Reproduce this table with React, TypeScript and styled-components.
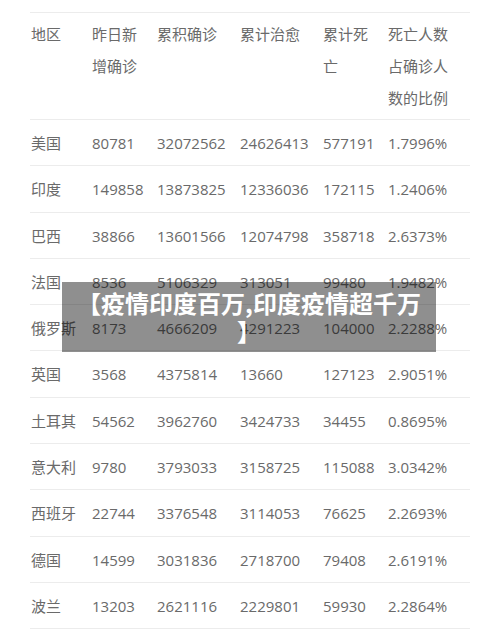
import styled, { createGlobalStyle } from 'styled-components'

const GlobalStyle = createGlobalStyle`
  body {
    margin: 0;
    background: #ffffff;
    font-family: "Open Sans", "Noto Sans CJK SC", sans-serif;
  }
`

const Page = styled.div`
  position: relative;
  width: 500px;
  height: 634px;
  overflow: hidden;
  padding: 12px 0 0 30px;
  box-sizing: border-box;
`

const Table = styled.table`
  width: 440px;
  table-layout: fixed;
  border-collapse: collapse;
  color: #6a6a6a;
  font-size: 15px;
  line-height: 32px;
`

const Row = styled.tr`
  border-top: 1px solid #ececec;
  border-bottom: 1px solid #ececec;
`

const Cell = styled.td<{ $head?: boolean }>`
  padding: ${(p) => (p.$head ? '5px 9px 5px 1px' : '7px 4px 6.3px 1px')};
  vertical-align: top;
  text-align: left;
  font-weight: normal;
  white-space: ${(p) => (p.$head ? 'normal' : 'nowrap')};
`

const Banner = styled.div`
  position: absolute;
  left: 62px;
  top: 282px;
  width: 374px;
  box-sizing: border-box;
  padding: 7px 14px;
  background: rgba(0, 0, 0, 0.44);
  color: #ffffff;
  font-family: "Noto Sans CJK SC", sans-serif;
  font-weight: 700;
  font-size: 24px;
  line-height: 28px;
  text-align: center;
  line-break: anywhere;
`

const widths = [61, 65, 83, 83, 65, 83]

const head = ['地区', '昨日新增确诊', '累积确诊', '累计治愈', '累计死亡', '死亡人数占确诊人数的比例']

const rows = [
  ['美国', '80781', '32072562', '24626413', '577191', '1.7996%'],
  ['印度', '149858', '13873825', '12336036', '172115', '1.2406%'],
  ['巴西', '38866', '13601566', '12074798', '358718', '2.6373%'],
  ['法国', '8536', '5106329', '313051', '99480', '1.9482%'],
  ['俄罗斯', '8173', '4666209', '4291223', '104000', '2.2288%'],
  ['英国', '3568', '4375814', '13660', '127123', '2.9051%'],
  ['土耳其', '54562', '3962760', '3424733', '34455', '0.8695%'],
  ['意大利', '9780', '3793033', '3158725', '115088', '3.0342%'],
  ['西班牙', '22744', '3376548', '3114053', '76625', '2.2693%'],
  ['德国', '14599', '3031836', '2718700', '79408', '2.6191%'],
  ['波兰', '13203', '2621116', '2229801', '59930', '2.2864%'],
]

export default function App() {
  return (
    <Page>
      <GlobalStyle />
      <Table>
        <colgroup>
          {widths.map((w, i) => (
            <col key={i} style={{ width: w }} />
          ))}
        </colgroup>
        <thead>
          <Row>
            {head.map((h) => (
              <Cell as="th" $head key={h}>
                {h}
              </Cell>
            ))}
          </Row>
        </thead>
        <tbody>
          {rows.map((r) => (
            <Row key={r[0]}>
              {r.map((c, i) => (
                <Cell key={i}>{c}</Cell>
              ))}
            </Row>
          ))}
        </tbody>
      </Table>
      <Banner>【疫情印度百万,印度疫情超千万】</Banner>
    </Page>
  )
}
